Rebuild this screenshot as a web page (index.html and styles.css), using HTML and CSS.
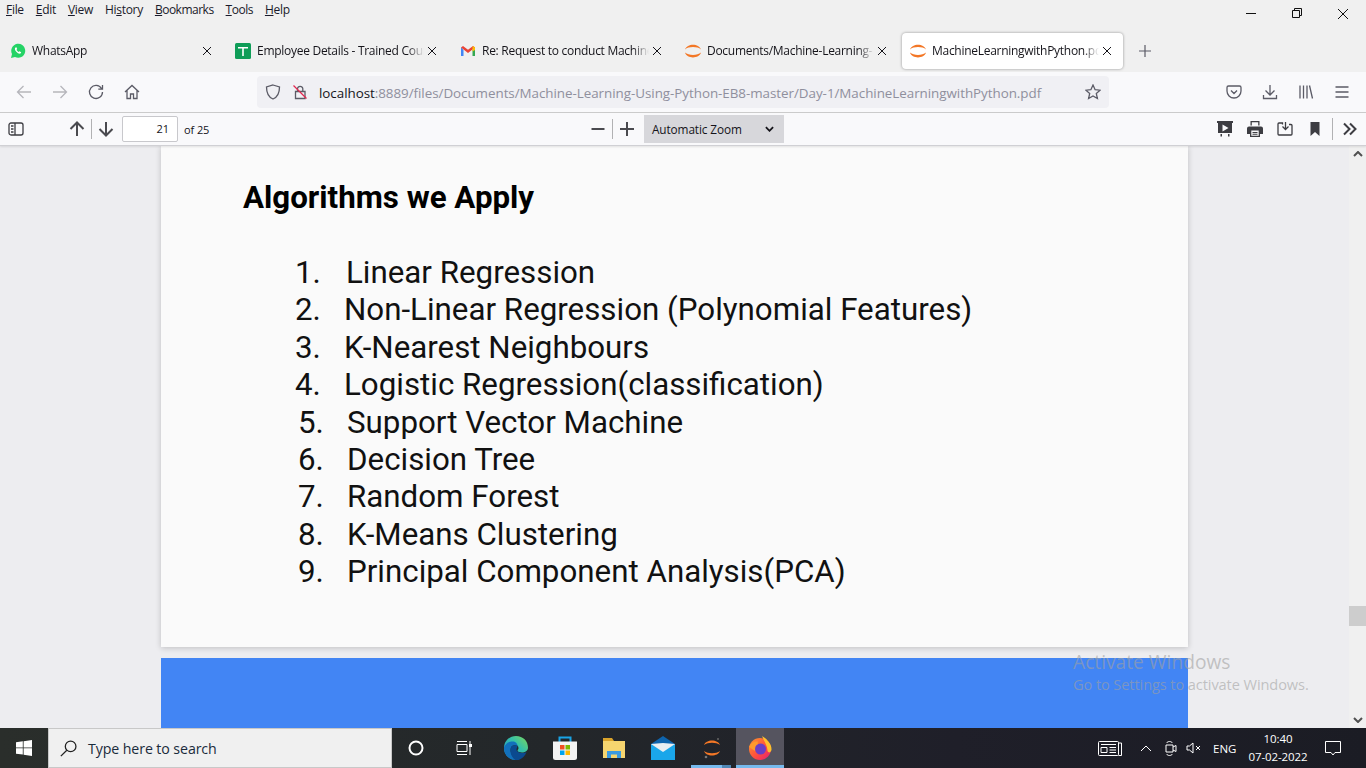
FILE: index.html
```html
<!DOCTYPE html>
<html lang="en">
<head>
<meta charset="utf-8">
<title>MachineLearningwithPython.pdf</title>
<link rel="stylesheet" href="styles.css">
</head>
<body>
<div class="app">
  <div class="menubar">
    <nav class="menus">
      <span><u>F</u>ile</span><span><u>E</u>dit</span><span><u>V</u>iew</span><span>Hi<u>s</u>tory</span><span class="tight"><u>B</u>ookmarks</span><span class="tight"><u>T</u>ools</span><span><u>H</u>elp</span>
    </nav>
    <div class="winctl">
      <svg class="wbtn" viewBox="0 0 46 30"><path d="M18 13.500h10" stroke="#111" fill="none"/></svg>
      <svg class="wbtn" viewBox="0 0 46 30"><path d="M18.500 10.500h7v7h-7zM20.500 10.500v-2h7v7h-2" stroke="#111" fill="none"/></svg>
      <svg class="wbtn" viewBox="0 0 46 30"><path d="M18 9l10 10M28 9l-10 10" stroke="#111" fill="none"/></svg>
    </div>
  </div>

  <div class="tabbar">
    <div class="tab">
      <svg class="favicon" viewBox="0 0 16 16"><path d="M1 15l1-4A7 7 0 1 1 5 14z" fill="#25d366"/><path d="M5.500 4.500c-1 1-.8 2.500.8 4.300 1.700 1.800 3.400 2.300 4.500 1.400l.4-1-1.800-1-.8.700c-.8-.3-1.700-1.200-2.100-2.100l.7-.8-.8-1.800z" fill="#fff"/></svg>
      <span class="tab-title">WhatsApp</span>
      <svg class="tab-x" viewBox="0 0 10 10"><path d="M1 1l8 8M9 1l-8 8"/></svg>
    </div>
    <div class="tab">
      <svg class="favicon" viewBox="0 0 16 16"><rect width="16" height="16" rx="1.500" fill="#0f9d58"/><path d="M3 4h10v1.500H8.800V13H7.200V5.500H3z" fill="#fff"/></svg>
      <span class="tab-title">Employee Details - Trained Cour</span>
      <svg class="tab-x" viewBox="0 0 10 10"><path d="M1 1l8 8M9 1l-8 8"/></svg>
    </div>
    <div class="tab">
      <svg class="favicon" viewBox="0 0 16 16"><path d="M1 4v9h2.500V7z" fill="#4285f4"/><path d="M15 4v9h-2.500V7z" fill="#34a853"/><path d="M1 4.500L3 3l5 3.800L13 3l2 1.500L8 10z" fill="#ea4335"/><path d="M13 3l2 1.500V7l-2.500 1.500V4z" fill="#fbbc04"/></svg>
      <span class="tab-title">Re: Request to conduct Machine</span>
      <svg class="tab-x" viewBox="0 0 10 10"><path d="M1 1l8 8M9 1l-8 8"/></svg>
    </div>
    <div class="tab">
      <svg class="favicon" viewBox="0 0 16 16"><path d="M0 6.500C2 0 14 0 16 6.500 12.500 3.300 3.500 3.300 0 6.500zM0 9.500C2 16 14 16 16 9.500 12.500 12.700 3.500 12.700 0 9.500z" fill="#f37726"/></svg>
      <span class="tab-title">Documents/Machine-Learning-</span>
      <svg class="tab-x" viewBox="0 0 10 10"><path d="M1 1l8 8M9 1l-8 8"/></svg>
    </div>
    <div class="tab active">
      <svg class="favicon" viewBox="0 0 16 16"><path d="M0 6.500C2 0 14 0 16 6.500 12.500 3.300 3.500 3.300 0 6.500zM0 9.500C2 16 14 16 16 9.500 12.500 12.700 3.500 12.700 0 9.500z" fill="#f37726"/></svg>
      <span class="tab-title">MachineLearningwithPython.pdf</span>
      <svg class="tab-x" viewBox="0 0 10 10"><path d="M1 1l8 8M9 1l-8 8"/></svg>
    </div>
    <svg class="newtab" viewBox="0 0 12 12"><path d="M6 0v12M0 6h12"/></svg>
  </div>

  <div class="navbar">
    <div class="nav-left">
      <svg class="ic faded" viewBox="0 0 16 16"><path d="M15 8H1.500M7.500 2l-6 6 6 6"/></svg>
      <svg class="ic faded" viewBox="0 0 16 16"><path d="M1 8h13.500M8.500 2l6 6-6 6"/></svg>
      <svg class="ic" viewBox="0 0 16 16"><path d="M13.500 4.500A6.500 6.500 0 1 0 14.500 8M14.500 1v4.200h-4.200"/></svg>
      <svg class="ic" viewBox="0 0 16 16"><path d="M1 8l7-6.500L15 8M3 6.500v8h3.500v-4.500h3v4.500H13v-8"/></svg>
    </div>
    <div class="urlbar">
      <svg class="ic shield" viewBox="0 0 16 16"><path d="M8 1l6.500 2c0 6-1.500 10-6.500 12C3 13 1.500 9 1.500 3z"/></svg>
      <svg class="ic lock" viewBox="0 0 16 16"><path d="M3.500 7.500h9.500v7H3.500zM5.500 7.500V4.500a2.700 2.700 0 0 1 5.300 0v3"/><path class="slash" d="M1.500 1.500l13 13"/></svg>
      <span class="url"><b>localhost</b>:8889/files/Documents/Machine-Learning-Using-Python-EB8-master/Day-1/MachineLearningwithPython.pdf</span>
      <svg class="ic star" viewBox="0 0 16 16"><path d="M8 1l2.100 4.700 5 .5-3.800 3.300 1.100 5L8 11.900l-4.400 2.600 1.100-5L.9 6.200l5-.5z"/></svg>
    </div>
    <div class="nav-right">
      <svg class="ic" viewBox="0 0 16 16"><path d="M2.500 2h11A1.500 1.500 0 0 1 15 3.500V7a7 7 0 0 1-14 0V3.500A1.500 1.500 0 0 1 2.500 2zM5 6.500l3 3 3-3"/></svg>
      <svg class="ic" viewBox="0 0 16 16"><path d="M8 1v10M3.500 6.500L8 11l4.500-4.500M1.500 11v3.500h13V11"/></svg>
      <svg class="ic" viewBox="0 0 16 16"><path d="M2 1.500v13M5.500 1.500v13M9 1.500v13M11.500 1.500l3 13"/></svg>
      <svg class="ic" viewBox="0 0 16 16"><path d="M1.500 3h13M1.500 8h13M1.500 13h13"/></svg>
    </div>
  </div>

  <div class="pdfbar">
    <div class="pdf-left">
      <svg class="ic sidebar" viewBox="0 0 16 16"><rect x="1" y="2" width="14" height="12" rx="2"/><path d="M7 2v12M3 5h2.500M3 8h2.500M3 11h2.500"/></svg>
      <svg class="ic dark up" viewBox="0 0 16 16"><path d="M8 15V1.500M1.500 8L8 1.500 14.500 8"/></svg>
      <span class="vsep"></span>
      <svg class="ic dark down" viewBox="0 0 16 16"><path d="M8 1v13.500M1.500 8L8 14.500 14.500 8"/></svg>
      <span class="pageinput">21</span>
      <span class="pagecount">of 25</span>
    </div>
    <div class="pdf-mid">
      <svg class="ic dark" viewBox="0 0 14 14"><path d="M.500 7h13"/></svg>
      <span class="vsep"></span>
      <svg class="ic dark" viewBox="0 0 14 14"><path d="M7 0v14M0 7h14"/></svg>
      <div class="zoomsel"><span>Automatic Zoom</span><svg viewBox="0 0 10 6"><path d="M1 1l4 4 4-4"/></svg></div>
    </div>
    <div class="pdf-right">
      <svg class="ic solid" viewBox="0 0 16 16"><path d="M0 0h16v2h-1v10H1V2H0zM5.500 3.500v7l6-3.500zM3.500 13h1.500v2.500H3.500zM11 13h1.500v2.500H11z" fill-rule="evenodd"/></svg>
      <svg class="ic solid" viewBox="0 0 16 16"><path d="M3.500 0h9v4.500h-1.300V1.300H4.800v3.200H3.500zM2 5.500h12a2 2 0 0 1 2 2v5.500h-3v3H3v-3H0V7.500a2 2 0 0 1 2-2zM4.300 9.500v5.200h7.400V9.500zM5.500 11h5v.9h-5zM5.500 12.800h5v.9h-5z" fill-rule="evenodd"/></svg>
      <svg class="ic" viewBox="0 0 16 16"><path d="M5.500 3.500V2H2a1 1 0 0 0-1 1v10a1 1 0 0 0 1 1h12a1 1 0 0 0 1-1V4.500a1 1 0 0 0-1-1h-2M8.500 1v7.500M5.500 5.500l3 3 3-3"/></svg>
      <svg class="ic solid" viewBox="0 0 16 16"><path d="M3.500 1h9v14L8 11l-4.500 4z"/></svg>
      <span class="vsep"></span>
      <svg class="ic more" viewBox="0 0 16 16"><path d="M2 2.500L7.500 8 2 13.500M8 2.500L13.500 8 8 13.500"/></svg>
    </div>
  </div>

  <main class="viewer">
    <div class="pages">
      <section class="page">
        <h1>Algorithms we Apply</h1>
        <ol class="algos">
          <li class="r1"><span class="n">1.</span><span class="t">Linear Regression</span></li>
          <li class="r2"><span class="n">2.</span><span class="t">Non-Linear Regression (Polynomial Features)</span></li>
          <li class="r2"><span class="n">3.</span><span class="t">K-Nearest Neighbours</span></li>
          <li class="r2"><span class="n">4.</span><span class="t">Logistic Regression(classification)</span></li>
          <li class="r3"><span class="n">5.</span><span class="t">Support Vector Machine</span></li>
          <li class="r3"><span class="n">6.</span><span class="t">Decision Tree</span></li>
          <li class="r3"><span class="n">7.</span><span class="t">Random Forest</span></li>
          <li class="r3"><span class="n">8.</span><span class="t">K-Means Clustering</span></li>
          <li class="r3"><span class="n">9.</span><span class="t">Principal Component Analysis(PCA)</span></li>
        </ol>
      </section>
      <section class="page-next"></section>
    </div>
    <div class="scrollbar">
      <svg viewBox="0 0 10 6"><path d="M1 5l4-4 4 4"/></svg>
      <div class="track"><div class="thumb"></div></div>
      <svg viewBox="0 0 10 6"><path d="M1 1l4 4 4-4"/></svg>
    </div>
    <div class="watermark">
      <div class="wm1">Activate Windows</div>
      <div class="wm2">Go to Settings to activate Windows.</div>
    </div>
  </main>

  <footer class="taskbar">
    <div class="start">
      <svg viewBox="0 0 16 16"><path d="M0 2.300l6.800-1v6.200H0zM7.600 1.200L16 0v7.500H7.600zM0 8.300h6.800v6.300L0 13.700zM7.600 8.300H16V16l-8.400-1.200z" fill="#fff"/></svg>
    </div>
    <div class="search">
      <svg viewBox="0 0 16 16"><circle cx="10" cy="6" r="5"/><path d="M6.400 9.600L.8 15.200"/></svg>
      <span>Type here to search</span>
    </div>
    <div class="tb-apps">
      <div class="app-btn sys"><svg class="w16" viewBox="0 0 16 16"><circle cx="8" cy="8" r="6.500" fill="none" stroke="#fff" stroke-width="2"/></svg></div>
      <div class="app-btn sys"><svg class="w16" viewBox="0 0 16 16"><path d="M1 4.500h10v7H1zM1 1.500h10M1 14.500h10M14 1v14" fill="none" stroke="#fff" stroke-width="1"/><rect x="13" y="4" width="3" height="3" fill="#fff"/></svg></div>
      <div class="app-btn first-pin"><svg class="w24" viewBox="0 0 24 24"><defs><linearGradient id="edgeTop" x1="0" y1="1" x2="1" y2="0"><stop offset="0" stop-color="#1f8fd0"/><stop offset=".6" stop-color="#35c1a8"/><stop offset="1" stop-color="#7fd857"/></linearGradient></defs><path d="M12 0c7 0 12 5 12 11.500 0 3.500-3 5-6 5-2.500 0-4.500-1-4.500-2 0-.7 1-1 1-2.500 0-2-2-4-5-4-4 0-6.500 3-6.500 6 0 4.500 3.500 9 9 10C5 24 0 18.500 0 12 0 5 5.500 0 12 0z" fill="url(#edgeTop)"/><path d="M1.500 9c2-3 5-3.500 7-3.500 3 0 5 2 5 4.500-2-1.500-5.500-1-6.500 1.500-1.500 4 1 10 6.500 12.500H12C5 24 0 18.500 0 12c0-1 .7-2.500 1.500-3z" fill="#1270bb"/><path d="M7 11.500c1-2.500 4.500-3 6.500-1.500 0 1.500-1 2-1 3.500 0 2 3 3.500 6 3.500 1.500 0 3-.3 4-1-1.500 5-6 8-10 8.500-5.500-2.500-7-9-5.500-13z" fill="#0b4a8f"/></svg></div>
      <div class="app-btn pin"><svg class="w24" viewBox="0 0 24 24"><path d="M6.500 6V1.500h11V6" fill="none" stroke="#19a4e6" stroke-width="2"/><path d="M0 5.500h24v16a2.500 2.500 0 0 1-2.500 2.500h-19A2.500 2.500 0 0 1 0 21.500z" fill="#f4f4f4"/><rect x="7" y="9" width="4.500" height="4.500" fill="#f25022"/><rect x="12.500" y="9" width="4.500" height="4.500" fill="#7fba00"/><rect x="7" y="14.500" width="4.500" height="4.500" fill="#00a4ef"/><rect x="12.500" y="14.500" width="4.500" height="4.500" fill="#ffb900"/></svg></div>
      <div class="app-btn pin"><svg class="w24" viewBox="0 0 24 24"><path d="M1 2h9l2 3h11v17H1z" fill="#d9a32b"/><path d="M1 5h22v17H1z" fill="#f6d56f"/><path d="M5 15h14v7h-4v-3.500H9V22H5z" fill="#3b9ae0"/></svg></div>
      <div class="app-btn pin"><svg class="w24" viewBox="0 0 24 24"><path d="M0 8L12 0l12 8v4L12 16 0 12z" fill="#0e64ad"/><path d="M0 8h24v16H0z" fill="#1aa6ea"/><path d="M0 8l12 8 12-8-12-1z" fill="#e9eef2"/></svg></div>
      <div class="app-btn pin running"><svg class="w24" viewBox="0 0 24 24"><path d="M4 9C6 3 18 3 20 9 16 6 8 6 4 9zM4 15c2 6 14 6 16 0-4 3-12 3-16 0z" fill="#f37726"/><circle cx="18" cy="3" r="1" fill="#666"/><circle cx="6" cy="21" r="1.300" fill="#777"/></svg></div>
      <div class="app-btn sys active"><svg class="w24" viewBox="0 0 24 24"><defs><linearGradient id="fxBody" x1="0" y1="0" x2="1" y2="1"><stop offset="0" stop-color="#ff9a2c"/><stop offset=".55" stop-color="#ff4f3c"/><stop offset="1" stop-color="#e5197a"/></linearGradient></defs><circle cx="12" cy="13" r="11" fill="url(#fxBody)"/><path d="M14 0c5 3 10 8 9.500 14-1 3-3 3-4 1 0-5-3-9-5.500-15z" fill="#ffc02c"/><path d="M1 11c2-5 6-6 9-5.500-1 2 0 3.500 3 3.500l-6 6z" fill="#ff9a2c"/><circle cx="12.500" cy="13" r="5.500" fill="#6a3fc4"/></svg></div>
    </div>
    <div class="tray">
      <svg class="news" viewBox="0 0 24 16"><rect x=".5" y="1.500" width="20" height="14" rx="1" /><path d="M20.500 3h3v12.500h-3M3 4.500h15M3 7.500h6v5H3zM11.500 7.500H18M11.500 10H18M11.500 12.500H18"/></svg>
      <svg class="chev" viewBox="0 0 12 7"><path d="M1 6l5-5 5 5"/></svg>
      <svg class="meet" viewBox="0 0 12 16"><path d="M1 5h7v7H1zM8 7l3-1.500v6L8 10M1.500 3C3 1 6 1 7.500 3M1.500 14C3 16 6 16 7.500 14"/></svg>
      <svg class="vol" viewBox="0 0 15 12"><path d="M1 4h2.500L7 1v10L3.500 8H1zM10 4l4 4M14 4l-4 4"/></svg>
      <span class="lang">ENG</span>
      <div class="clock"><span>10:40</span><span>07-02-2022</span></div>
      <svg class="notif" viewBox="0 0 16 15"><path d="M.5.500h15v11H10L8 14l-2-2.500H.5z"/></svg>
    </div>
  </footer>
</div>
</body>
</html>
```
FILE: styles.css
```css
* { box-sizing: border-box; }
html, body { margin: 0; height: 100%; overflow: hidden; }
body { font-family: "Open Sans", "Noto Sans", sans-serif; color: #15141a; }
.app { width: 1366px; height: 768px; display: flex; flex-direction: column; background: #f0f0f4; }

.menubar { height: 30px; background: #f0f0f0; display: flex; justify-content: space-between; flex: none; }
.menus { display: flex; gap: 12px; padding: 2px 0 0 6px; font-size: 12px; line-height: 16px; color: #1a1a2a; letter-spacing: -.3px; }
.menus .tight { letter-spacing: -.5px; }
.winctl { display: flex; }
.wbtn { width: 46px; height: 30px; display: block; }

.tabbar { height: 42px; background: #f0f0f0; display: flex; align-items: center; gap: 4px; padding: 0 0 0 2px; flex: none; }
.tab { width: 221px; height: 36px; border-radius: 4px; display: flex; align-items: center; padding: 0 11px 0 8px; position: relative; }
.tab.active { background: #fff; box-shadow: 0 0 3px rgba(0,0,0,.4); }
.favicon { width: 16px; height: 16px; flex: none; margin-right: 6px; }
.tab-title { flex: 1; white-space: nowrap; overflow: hidden; font-size: 12px; letter-spacing: -.28px; line-height: 16px; color: #15141a; margin-right: 3px; -webkit-mask-image: linear-gradient(to left, transparent 0, #000 16px); mask-image: linear-gradient(to left, transparent 0, #000 16px); }
.tab-x { width: 10px; height: 10px; flex: none; fill: none; stroke: #15141a; stroke-width: 1; }
.newtab { width: 12px; height: 12px; margin-left: 12px; fill: none; stroke: #5b5b66; stroke-width: 1.200; }

.navbar { height: 41px; background: #f9f9fb; display: flex; align-items: center; border-bottom: 1px solid #ccc; flex: none; }
.ic { width: 16px; height: 16px; fill: none; stroke: #5b5b66; stroke-width: 1.300; flex: none; display: block; }
.ic.faded { stroke: #b6b6bb; }
.ic.dark { stroke: #4a4a4f; stroke-width: 2; }
.ic.solid { fill: #3d3d42; stroke: none; }
.nav-left { width: 257px; display: flex; align-items: center; gap: 20px; padding-left: 16px; }
.urlbar { width: 852px; height: 32px; background: #f0f0f4; border-radius: 4px; display: flex; align-items: center; padding: 0 8px; }
.shield { margin-right: 11px; }
.lock { margin-right: 11px; }
.lock .slash { stroke: #e22850; }
.url { flex: 1; font-size: 13.400px; letter-spacing: -.04px; line-height: 18px; padding-top: 2px; color: #8f8f9d; white-space: nowrap; overflow: hidden; }
.url b { font-weight: 400; color: #15141a; }
.nav-right { flex: 1; display: flex; align-items: center; justify-content: flex-end; gap: 20px; padding-right: 16px; }

.pdfbar { height: 33px; background: #f9f9fb; position: relative; display: flex; align-items: center; font-size: 11px; border-bottom: 1px solid #d0d0d4; box-shadow: 0 1px 2px rgba(0,0,0,.1); z-index: 2; flex: none; }
.vsep { width: 1px; height: 20px; background: #b1b1b3; flex: none; }
.pdf-left { width: 590px; display: flex; align-items: center; padding-left: 8px; }
.sidebar { margin-right: 45px; stroke: #3d3d42; }
.up { margin-right: 6px; }
.down { margin: 0 8px 0 6px; }
.pageinput { width: 56px; height: 26px; border: 1px solid #c8c8cc; background: #fff; border-radius: 2px; text-align: right; padding-right: 8px; line-height: 24px; font-size: 11px; color: #15141a; }
.pagecount { margin-left: 6px; color: #15141a; letter-spacing: -.1px; }
.pdf-mid { width: 194px; display: flex; align-items: center; gap: 7px; padding-left: 1px; }
.pdf-mid .ic { width: 14px; height: 14px; }
.zoomsel { width: 140px; height: 28px; margin-left: 3px; background: #d7d7db; display: flex; align-items: center; justify-content: space-between; padding: 0 10px 0 8px; font-size: 11.800px; letter-spacing: -.1px; color: #15141a; }
.zoomsel svg { width: 9px; height: 6px; fill: none; stroke: #15141a; stroke-width: 2; }
.pdf-right { flex: 1; display: flex; align-items: center; justify-content: flex-end; gap: 14px; padding-right: 8px; }
.pdf-right .ic { stroke: #3d3d42; }
.pdf-right .ic.solid { stroke: none; }
.pdf-right .vsep { height: 22px; margin: 0 -5px; }
.pdf-right .more { stroke-width: 2; }

.viewer { flex: 1; min-height: 0; background: #ededf0; position: relative; display: flex; overflow: hidden; }
.pages { flex: 1; padding-left: 161px; display: flex; flex-direction: column; gap: 11px; }
.page { width: 1027px; height: 501px; flex: none; background: #fafafa; box-shadow: 0 1px 6px rgba(0,0,0,.2); padding: 29px 0 0 82px; }
.page h1 { margin: 0; font: 700 31.300px/46px Roboto, sans-serif; color: #000; }
.algos { list-style: none; margin: 33px 0 0; padding: 0; font: 400 31.300px/37.400px Roboto, sans-serif; color: #111; }
.algos li { display: flex; height: 37.400px; white-space: nowrap; }
.algos .n { width: 51px; }
.r1 { padding-left: 52px; }
.r2 { padding-left: 52px; }
.r2 .t { margin-left: -2px; }
.r3 { padding-left: 55px; }
.r3 .t { margin-left: -2px; }
.page-next { width: 1027px; flex: 1; background: #4285f4; }
.scrollbar { width: 17px; background: #f0f0f0; display: flex; flex-direction: column; align-items: center; justify-content: space-between; flex: none; padding: 5px 0; }
.scrollbar svg { width: 10px; height: 6px; fill: none; stroke: #505050; stroke-width: 2; flex: none; }
.track { flex: 1; width: 100%; position: relative; }
.thumb { position: absolute; left: 0; right: 0; top: 449px; height: 20px; background: #cdcdcd; }
.watermark { position: absolute; left: 1073px; top: 504px; color: rgba(161,161,161,.6); pointer-events: none; white-space: nowrap; }
.wm1 { font-size: 19.200px; line-height: 24px; }
.wm2 { font-size: 14.600px; line-height: 20px; letter-spacing: -.1px; }

.taskbar { height: 40px; flex: none; background: linear-gradient(to right, #2a2e2b, #23272a 40%, #1f1f29 70%, #1b1c24); display: flex; color: #fff; }
.start { width: 48px; display: flex; align-items: center; justify-content: center; }
.start svg { width: 16px; height: 16px; }
.search { width: 344px; background: #f0f0f0; border: 1px solid #c8c8c8; display: flex; align-items: center; padding-left: 11px; gap: 11px; color: #1a2b3b; font-size: 14.200px; letter-spacing: -.1px; }
.search svg { width: 17px; height: 17px; fill: none; stroke: #222; stroke-width: 1.200; flex: none; }
.tb-apps { display: flex; }
.app-btn { height: 40px; display: flex; align-items: center; justify-content: center; position: relative; }
.app-btn.sys { width: 48px; }
.app-btn.pin { width: 49px; }
.app-btn.first-pin { width: 49px; margin-left: 3px; }
.app-btn.running::after { content: ""; position: absolute; left: 4px; right: 5px; bottom: 0; height: 3px; background: linear-gradient(to right, #76b9ed 77%, #4f86b4 77%); }
.app-btn.active { background: #55545f; }
.app-btn.active::after { content: ""; position: absolute; left: 0; right: 0; bottom: 0; height: 3px; background: #76b9ed; }
.w16 { width: 16px; height: 16px; }
.w24 { width: 24px; height: 24px; }
.tray { flex: 1; display: flex; align-items: center; justify-content: flex-end; color: #fff; font-size: 12px; }
.tray svg { fill: none; stroke: #fff; stroke-width: 1; flex: none; }
.news { width: 24px; height: 16px; margin-right: 18px; }
.chev { width: 12px; height: 7px; margin-right: 13px; }
.meet { width: 12px; height: 16px; margin-right: 9px; }
.vol { width: 15px; height: 12px; margin-right: 12px; }
.lang { width: 23px; text-align: center; font-size: 11.500px; }
.clock { width: 84px; display: flex; flex-direction: column; align-items: center; line-height: 18px; font-size: 11.500px; letter-spacing: -.1px; }
.notif { width: 16px; height: 15px; margin: 0 25px 0 5px; }
```
